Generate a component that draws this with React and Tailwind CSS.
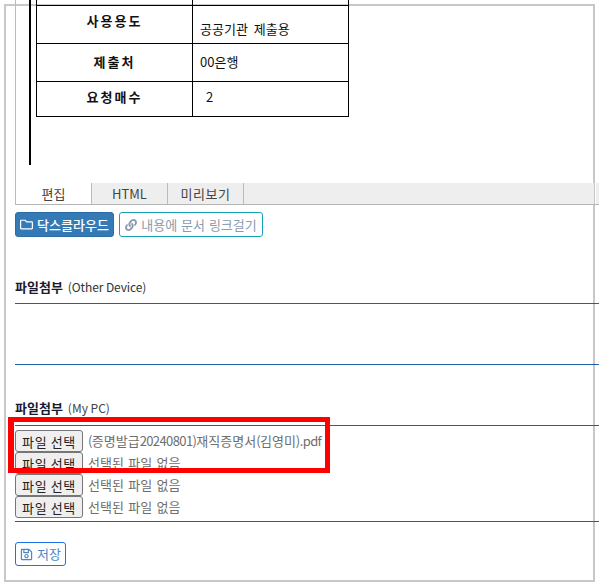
import React from "react";
import { FaRegFolder, FaLink, FaRegSave } from "react-icons/fa";

const L = ({ children }) => <span className="tracking-[-0.6px]">{children}</span>;

const FileRow = ({ children }) => (
  <div className="flex h-[22px] items-center">
    <button className="h-[22px] w-[68px] shrink-0 rounded-[3px] border border-[#767676] bg-[#efefef] text-[13px] leading-none tracking-[0.6px] text-[#222]">파일 선택</button>
    <span className="ml-[5px] whitespace-nowrap text-[13px] text-[#6e6e6e] [word-spacing:1.5px]">{children}</span>
  </div>
);

export default function App() {
  return (
    <div className="relative h-[587px] w-[599px] overflow-hidden bg-white font-['Noto_Sans_CJK_KR','Noto_Sans',sans-serif]">
      <div className="ml-1 mt-1 h-[578px] w-[591px] border-2 border-[#c8c8c8]">
        <div className="ml-[9px] mt-[-6px] w-[584px]">
          {/* editor */}
          <div className="border-l border-[#bbb]">
            <div className="h-[183px] pl-[13px]">
              <div className="flow-root h-[165px] border-l-2 border-black pl-[5px]">
                <table className="mt-[-10px] w-[313px] table-fixed border-collapse text-[13px] text-[#111]">
                  <tbody>
                    <tr className="h-[15px]">
                      <td className="w-[156px] border border-black p-0"></td>
                      <td className="border border-black p-0"></td>
                    </tr>
                    <tr className="h-[38px]">
                      <td className="border border-black pb-[8px] text-center font-bold tracking-[2px]">사용용도</td>
                      <td className="border border-black pl-[7px] pt-[8px] [word-spacing:3px]">공공기관 제출용</td>
                    </tr>
                    <tr className="h-[38px]">
                      <td className="border border-black pb-[2px] text-center font-bold tracking-[2px]">제출처</td>
                      <td className="border border-black pb-[2px] pl-[7px]">00은행</td>
                    </tr>
                    <tr className="h-[35px]">
                      <td className="border border-black pb-[5px] text-center font-bold tracking-[2px]">요청매수</td>
                      <td className="border border-black pb-[4px] pl-[13px]">2</td>
                    </tr>
                  </tbody>
                </table>
              </div>
            </div>
            {/* tabs */}
            <div className="flex h-[22px] border-b border-[#b4b4b4] text-[13px] text-[#444]">
              <div className="flex w-[76px] items-center justify-center border-r border-[#bbb] bg-white">편집</div>
              <div className="flex w-[76px] items-center justify-center border-r border-[#bbb] bg-[#eee]">HTML</div>
              <div className="flex w-[76px] items-center justify-center border-r border-[#bbb] bg-[#eee] tracking-[0.6px]">미리보기</div>
              <div className="w-[350px] bg-[#eee]"></div>
              <div className="w-[2px]"></div>
              <div className="flex-1 bg-[#eee]"></div>
            </div>
          </div>

          {/* buttons */}
          <div className="mt-[7px] flex gap-[5px]">
            <button className="flex h-[25px] w-[99px] items-center justify-center gap-[4px] rounded-[3px] border border-[#2e6da4] bg-[#337ab7] text-[13px] font-medium text-white">
              <FaRegFolder className="h-[13px] w-[13px]" />
              닥스클라우드
            </button>
            <button className="flex h-[25px] w-[144px] items-center justify-center gap-[4px] rounded-[3px] border border-[#17a2b8] bg-white text-[13px] text-[#8a9bb0] [word-spacing:1px]">
              <FaLink className="h-[12px] w-[12px]" />
              내용에 문서 링크걸기
            </button>
          </div>

          {/* other device */}
          <div className="mt-[40px] flex h-[20px] items-center text-[13px] text-[#1a1a2e]">
            <b className="font-bold">파일첨부</b>
            <span className="ml-[5px] text-[12px] tracking-[-0.1px] text-[#333]">(Other Device)</span>
          </div>
          <div className="mt-[6px] h-[62px] border-y border-[#1f5fa8]"></div>

          {/* my pc */}
          <div className="mt-[33px] flex h-[20px] items-center text-[13px] text-[#1a1a2e]">
            <b className="font-bold">파일첨부</b>
            <span className="ml-[5px] text-[12px] text-[#444]">(My PC)</span>
          </div>
          <div className="mt-[7px] flex h-[97px] flex-col border-y border-[#1f5fa8] pt-[4px]">
            <FileRow><L>(</L>증명발급<L>20240801)</L>재직증명서<L>(</L>김영미<L>).pdf</L></FileRow>
            <FileRow>선택된 파일 없음</FileRow>
            <FileRow>선택된 파일 없음</FileRow>
            <FileRow>선택된 파일 없음</FileRow>
          </div>

          {/* save */}
          <button className="mt-[20px] flex h-[24px] w-[51px] items-center justify-center gap-[4px] rounded-[3px] border border-[#1a73e8] bg-white text-[13px] text-[#4a86c8]">
            <FaRegSave className="h-[13px] w-[13px]" />
            저장
          </button>
        </div>
      </div>

      {/* red annotation */}
      <div className="pointer-events-none absolute left-[8px] top-[417px] h-[56px] w-[322px] border-[5px] border-l-[6px] border-[#ff0000]"></div>
    </div>
  );
}
